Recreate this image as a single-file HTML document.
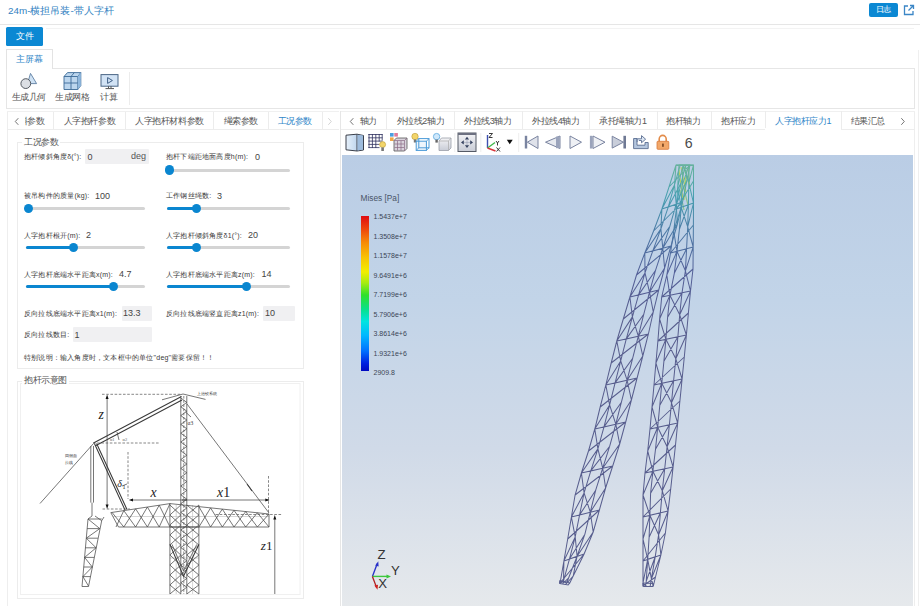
<!DOCTYPE html>
<html><head><meta charset="utf-8">
<style>
*{box-sizing:border-box;margin:0;padding:0}
html,body{width:920px;height:606px;overflow:hidden;background:#fff;font-family:"Liberation Sans",sans-serif;color:#444}
.a{position:absolute;white-space:nowrap}
.t9{font-size:9px;line-height:10px;letter-spacing:-0.4px}
.lbl{font-size:7px;line-height:9px;color:#383838;letter-spacing:0.2px}
.val{font-size:9px;line-height:10px;color:#444}
.trk{position:absolute;height:3px;background:#d4d4d4;border-radius:2px}
.act{position:absolute;left:0;top:0;height:3px;background:#0a86d0;border-radius:2px}
.knob{position:absolute;width:9.2px;height:9.2px;border-radius:5px;background:#0a86d0;top:-3.1px}
.inp{position:absolute;background:#f0f0f2;border-radius:1px}
.tab{position:absolute;top:0;height:19px;border-right:1px solid #ececec;font-size:8.6px;line-height:19px;color:#444;text-align:center}
</style></head><body>

<!-- title bar -->
<div class="a" style="left:8px;top:5px;font-size:9.9px;line-height:12px;color:#3483c2">24m-横担吊装-带人字杆</div>
<div class="a" style="left:869px;top:3px;width:29px;height:14px;background:#0b88d3;border-radius:2px;color:#fff;font-size:8px;line-height:14px;text-align:center;letter-spacing:-0.6px;text-indent:-0.6px">日志</div>
<svg class="a" style="left:903px;top:4px" width="12" height="12" viewBox="0 0 12 12"><path d="M5 2H1.5V10.5H10V7" fill="none" stroke="#3b86c6" stroke-width="1.3"/><path d="M7 1.5H10.5V5M10.5 1.5L5.5 6.5" fill="none" stroke="#3b86c6" stroke-width="1.3"/></svg>
<div class="a" style="left:0;top:24px;width:920px;height:1px;background:#e6e6e6"></div>
<div class="a" style="left:46px;top:27.5px;width:868px;height:1px;background:#f3f3f3"></div>

<!-- file button -->
<div class="a" style="left:918px;top:50px;width:1px;height:556px;background:#efefef"></div>
<div class="a" style="left:6px;top:27px;width:37px;height:19px;border-radius:1.5px;background:#0b88d3;color:#fff;font-size:8.8px;line-height:19px;text-align:center">文件</div>
<!-- ribbon tab -->
<div class="a" style="left:6px;top:49px;width:47px;height:20px;border:1px solid #e3e3e3;border-bottom:none;background:#fff;color:#2f86c8;font-size:8.8px;line-height:18px;text-align:center;z-index:2">主屏幕</div>
<div class="a" style="left:6px;top:68px;width:909px;height:41px;border:1px solid #e6e6e6"></div>
<div class="a" style="left:129px;top:72px;width:1px;height:33px;background:#ececec"></div>

<svg class="a" style="left:0;top:60px" width="130" height="32" viewBox="0 60 130 32">
<path d="M30.5 73.4L36.6 83.6H27.5Z" fill="#cfe2f4" stroke="#5d7fa3" stroke-width="0.9" stroke-linejoin="round"/>
<circle cx="25.8" cy="83.6" r="4.9" fill="#dcdfe4" stroke="#555b63" stroke-width="1"/>
<path d="M64 76.5L67.5 72.6H80.8V85.6L77.8 89.5H64Z" fill="#bcd6ee" stroke="#3b6a96" stroke-width="0.9" stroke-linejoin="round"/>
<path d="M64 76.5H77.8L80.8 72.6M77.8 76.5V89.5M71 76.5V89.5M64 83H77.8M71 76.5L74.3 72.6M77.8 83L80.8 79" fill="none" stroke="#3b6a96" stroke-width="0.9"/>
<path d="M77.8 76.5L80.8 72.6V85.6L77.8 89.5Z" fill="#8fb7dd"/>
<rect x="101" y="74.6" width="17" height="11.6" fill="#d2e3f5" stroke="#4b6685" stroke-width="1"/>
<path d="M107.6 77.6L112.4 80.5L107.6 83.4Z" fill="none" stroke="#3f5f86" stroke-width="1"/>
<path d="M108.5 86.2V88.2M111 86.2V88.2M105.5 88.6H114" stroke="#555" stroke-width="1"/>
</svg>
<div class="a t9" style="left:11.5px;top:92px;color:#555">生成几何</div>
<div class="a t9" style="left:55px;top:92px;color:#555">生成网格</div>
<div class="a t9" style="left:100px;top:92px;color:#555">计算</div>


<!-- left panel -->
<div class="a" style="left:7px;top:111px;width:334px;height:495px;border-left:1px solid #eeeeee;border-right:1px solid #e6e6e6"></div>
<div class="a" style="left:7px;top:129px;width:332px;height:1px;background:#ededed"></div>
<div class="a" style="left:53px;top:111px;width:1px;height:18px;background:#ececec"></div>
<div class="a" style="left:125px;top:111px;width:1px;height:18px;background:#ececec"></div>
<div class="a" style="left:213px;top:111px;width:1px;height:18px;background:#ececec"></div>
<div class="a" style="left:268px;top:111px;width:1px;height:18px;background:#ececec"></div>
<div class="a" style="left:322px;top:111px;width:1px;height:18px;background:#ececec"></div>
<div class="a" style="left:7px;top:111px;width:332px;height:1px;background:#f0f0f0"></div>
<svg class="a" style="left:14px;top:117px" width="6" height="9"><path d="M4.3 1.2L1.3 4.5L4.3 7.8" fill="none" stroke="#666" stroke-width="0.9"/></svg>
<div class="a" style="left:24.5px;top:111px;width:28px;height:18px;overflow:hidden"><div class="a t9" style="right:8.2px;top:5px;color:#555">料参数</div></div>
<div class="a t9" style="left:63.5px;top:116px;color:#555">人字抱杆参数</div>
<div class="a t9" style="left:135px;top:116px;color:#555">人字抱杆材料参数</div>
<div class="a t9" style="left:223.5px;top:116px;color:#555">绳索参数</div>
<div class="a t9" style="left:277.5px;top:116px;color:#2f86c8">工况参数</div>
<svg class="a" style="left:327px;top:117px" width="6" height="9"><path d="M1.3 1.2L4.3 4.5L1.3 7.8" fill="none" stroke="#cfcfcf" stroke-width="0.9"/></svg>

<!-- fieldset 1 -->
<div class="a" style="left:17px;top:142px;width:287px;height:227px;border:1px solid #ececec"></div>
<div class="a t9" style="left:22px;top:137px;background:#fff;padding:0 2px;color:#555">工况参数</div>

<div class="a lbl" style="left:24px;top:152px">抱杆倾斜角度δ(°):</div>
<div class="inp" style="left:85px;top:149px;width:64px;height:15px"></div>
<div class="a val" style="left:87.5px;top:151.5px">0</div>
<div class="a val" style="left:131px;top:151px;color:#555">deg</div>

<div class="a lbl" style="left:166px;top:152px">抱杆下端距地面高度h(m):</div>
<div class="a val" style="left:255px;top:151.5px">0</div>
<div class="trk" style="left:167px;top:168.5px;width:123px"><div class="knob" style="left:-2px"></div></div>

<div class="a lbl" style="left:24px;top:191px">被吊构件的质量(kg):</div>
<div class="a val" style="left:95px;top:190.5px">100</div>
<div class="trk" style="left:26px;top:207px;width:119px"><div class="knob" style="left:-2px"></div></div>
<div class="a lbl" style="left:166px;top:191px">工作钢丝绳数:</div>
<div class="a val" style="left:217px;top:190.5px">3</div>
<div class="trk" style="left:167px;top:207px;width:123px"><div class="act" style="width:30px"></div><div class="knob" style="left:25px"></div></div>

<div class="a lbl" style="left:24px;top:230.5px">人字抱杆根开(m):</div>
<div class="a val" style="left:86px;top:230px">2</div>
<div class="trk" style="left:26px;top:246px;width:119px"><div class="act" style="width:48px"></div><div class="knob" style="left:43px"></div></div>
<div class="a lbl" style="left:166px;top:230.5px">人字抱杆倾斜角度δ1(°):</div>
<div class="a val" style="left:248px;top:230px">20</div>
<div class="trk" style="left:167px;top:246px;width:123px"><div class="act" style="width:30px"></div><div class="knob" style="left:25px"></div></div>

<div class="a lbl" style="left:24px;top:269.5px">人字抱杆底端水平距离x(m):</div>
<div class="a val" style="left:119px;top:269px">4.7</div>
<div class="trk" style="left:26px;top:285px;width:119px"><div class="act" style="width:88px"></div><div class="knob" style="left:83px"></div></div>
<div class="a lbl" style="left:166px;top:269.5px">人字抱杆底端水平距离z(m):</div>
<div class="a val" style="left:261.5px;top:269px">14</div>
<div class="trk" style="left:167px;top:285px;width:123px"><div class="act" style="width:80px"></div><div class="knob" style="left:75px"></div></div>

<div class="a lbl" style="left:24px;top:309px">反向拉线底端水平距离x1(m):</div>
<div class="inp" style="left:121.5px;top:305.5px;width:30px;height:15px"></div>
<div class="a val" style="left:123px;top:308px">13.3</div>
<div class="a lbl" style="left:166px;top:309px">反向拉线底端竖直距离z1(m):</div>
<div class="inp" style="left:263px;top:305.5px;width:31.5px;height:15px"></div>
<div class="a val" style="left:265px;top:308px">10</div>

<div class="a lbl" style="left:24px;top:330px">反向拉线数目:</div>
<div class="inp" style="left:72.5px;top:327px;width:79px;height:15px"></div>
<div class="a val" style="left:74.5px;top:329.5px">1</div>

<div class="a lbl" style="left:24px;top:352.5px">特别说明：输入角度时，文本框中的单位"deg"需要保留！！</div>

<!-- fieldset 2 -->
<div class="a" style="left:16.5px;top:380.5px;width:287px;height:218px;border:1px solid #ececec"></div>
<div class="a t9" style="left:22px;top:375px;background:#fff;padding:0 2px;color:#555;z-index:3;letter-spacing:-0.5px">抱杆示意图</div>
<div id="diagram"><svg class="a" style="left:17px;top:381px" width="286" height="217" viewBox="17 381 286 217">
<rect x="20.5" y="383.5" width="279.5" height="211" fill="none" stroke="#f0f0f0" stroke-width="1"/>
<path d="M113.0 516.5L269.0 516.5M176.2 505.0L176.2 594.0M192.6 505.0L192.6 594.0M169.9 558.0L198.9 558.0" fill="none" stroke="#bbb" stroke-width="0.6"/>
<path d="M107.1 397.0L107.1 506.0M131.0 500.0L269.0 500.0M274.8 518.0L274.8 594.0M162.0 399.8L183.0 394.0M183.0 394.0L205.5 399.4M93.5 443.5L40.0 503.5M90.8 446.0L90.8 502.6M93.5 446.0L93.5 502.6M92.0 502.6L92.0 516.0M187.0 404.0L269.0 513.0M117.0 432.0L119.0 440.0M185.5 412.0L191.0 417.0M122.0 486.0L127.0 484.0M180.8 396.0L180.8 594.0M186.8 396.0L186.8 594.0M180.8 398.0L186.8 402.4M186.8 402.4L180.8 406.8M180.8 406.8L186.8 411.2M186.8 411.2L180.8 415.6M180.8 415.6L186.8 420.0M186.8 420.0L180.8 424.4M180.8 424.4L186.8 428.8M186.8 428.8L180.8 433.2M180.8 433.2L186.8 437.6M186.8 437.6L180.8 442.0M180.8 442.0L186.8 446.4M186.8 446.4L180.8 450.8M180.8 450.8L186.8 455.2M186.8 455.2L180.8 459.6M180.8 459.6L186.8 464.0M186.8 464.0L180.8 468.4M180.8 468.4L186.8 472.8M186.8 472.8L180.8 477.2M180.8 477.2L186.8 481.6M186.8 481.6L180.8 486.0M180.8 486.0L186.8 490.4M186.8 490.4L180.8 494.8M180.8 494.8L186.8 499.2M186.8 499.2L180.8 503.6M180.8 503.6L186.8 508.0M186.8 508.0L180.8 512.4M180.8 512.4L186.8 516.8M186.8 516.8L180.8 521.2M180.8 521.2L186.8 525.6M186.8 525.6L180.8 530.0M180.8 530.0L186.8 534.4M186.8 534.4L180.8 538.8M180.8 538.8L186.8 543.2M186.8 543.2L180.8 547.6M180.8 547.6L186.8 552.0M186.8 552.0L180.8 556.4M180.8 556.4L186.8 560.8M186.8 560.8L180.8 565.2M180.8 565.2L186.8 569.6M186.8 569.6L180.8 574.0M180.8 574.0L186.8 578.4M186.8 578.4L180.8 582.8M180.8 582.8L186.8 587.2M186.8 587.2L180.8 591.6M110.8 512.6L170.0 503.6L269.0 514.0M118.5 527.0L269.0 527.0M110.8 512.6L118.5 527.0M269.0 514.0L269.0 527.0M112.0 512.4L123.8 527.0M116.0 527.0L123.8 510.6M123.8 510.6L135.6 527.0M123.8 527.0L135.6 508.8M135.6 508.8L147.4 527.0M135.6 527.0L147.4 507.0M147.4 507.0L159.2 527.0M147.4 527.0L159.2 505.2M159.2 505.2L170.0 527.0M159.2 527.0L170.0 503.6M198.9 506.6L210.6 527.0M198.9 527.0L210.6 507.9M210.6 507.9L222.3 527.0M210.6 527.0L222.3 509.1M222.3 509.1L234.0 527.0M222.3 527.0L234.0 510.3M234.0 510.3L245.7 527.0M234.0 527.0L245.7 511.6M245.7 511.6L257.4 527.0M245.7 527.0L257.4 512.8M257.4 512.8L269.0 527.0M257.4 527.0L269.0 514.0M169.9 503.6L169.9 594.0M198.9 505.0L198.9 594.0M169.9 505.0L180.8 515.0M180.8 505.0L169.9 515.0M198.9 505.0L186.8 515.0M186.8 505.0L198.9 515.0M169.9 515.0L180.8 525.0M180.8 515.0L169.9 525.0M198.9 515.0L186.8 525.0M186.8 515.0L198.9 525.0M169.9 525.0L180.8 535.0M180.8 525.0L169.9 535.0M198.9 525.0L186.8 535.0M186.8 525.0L198.9 535.0M169.9 535.0L180.8 545.0M180.8 535.0L169.9 545.0M198.9 535.0L186.8 545.0M186.8 535.0L198.9 545.0M169.9 545.0L180.8 555.0M180.8 545.0L169.9 555.0M198.9 545.0L186.8 555.0M186.8 545.0L198.9 555.0M169.9 555.0L180.8 565.0M180.8 555.0L169.9 565.0M198.9 555.0L186.8 565.0M186.8 555.0L198.9 565.0M169.9 565.0L180.8 575.0M180.8 565.0L169.9 575.0M198.9 565.0L186.8 575.0M186.8 565.0L198.9 575.0M169.9 575.0L180.8 585.0M180.8 575.0L169.9 585.0M198.9 575.0L186.8 585.0M186.8 575.0L198.9 585.0M169.9 585.0L180.8 594.0M180.8 585.0L169.9 594.0M198.9 585.0L186.8 594.0M186.8 585.0L198.9 594.0M169.9 527.0L198.9 527.0M172.0 544.4L183.5 571.0L196.8 544.4M92.0 516.0L88.0 519.0L82.0 586.5L88.5 586.5L101.7 520.7L95.0 516.0M88.0 519.0L99.8 528.6M88.0 519.0L101.7 519.0M99.8 528.6L86.3 538.2M87.1 528.6L99.8 528.6M86.3 538.2L96.1 547.8M86.3 538.2L97.9 538.2M96.1 547.8L84.6 557.4M85.4 547.8L96.1 547.8M84.6 557.4L92.3 567.0M84.6 557.4L94.2 557.4M92.3 567.0L82.9 576.6M83.7 567.0L92.3 567.0M82.9 576.6L88.6 586.2M82.9 576.6L90.4 576.6M101.7 520.7L104.0 517.0" fill="none" stroke="#4a4a4a" stroke-width="0.75"/>
<path d="M182.0 500.0L187.0 500.0M93.5 443.0L181.5 396.5M95.0 446.0L182.0 400.0M94.4 443.5L125.0 510.0M96.6 443.5L127.0 509.5M247.0 484.0L252.0 491.0M169.9 544.4L183.5 576.2L198.9 544.4" fill="none" stroke="#3a3a3a" stroke-width="1.05"/>
<path d="M102.0 394.3L181.0 394.3M93.0 443.0L159.5 443.0M128.0 452.0L128.0 499.0M268.5 476.0L268.5 514.0M215.5 514.5L281.5 514.5M102.5 509.0L130.0 509.0M183.8 396.0L183.8 594.0" fill="none" stroke="#555" stroke-width="0.7" stroke-dasharray="2.6 1.6"/>
<path d="M107.1 394.5L105.6 399H108.6Z M107.1 509L105.6 504.5H108.6Z M128.8 500L133 498.4V501.6Z M269.5 500L265.3 498.4V501.6Z M274.8 515L273.3 519.5H276.3Z" fill="#111"/>
<text x="98.6" y="418.9" font-family="Liberation Serif" font-style="italic" font-size="13.8" fill="#222">z</text>
<text x="150.4" y="497.3" font-family="Liberation Serif" font-style="italic" font-size="13.8" fill="#222">x</text>
<text x="217" y="497.4" font-family="Liberation Serif" font-size="13.8" fill="#222"><tspan font-style="italic">x</tspan>1</text>
<text x="260.8" y="550.4" font-family="Liberation Serif" font-size="13.2" fill="#222"><tspan font-style="italic">z</tspan>1</text>
<text x="117.3" y="487.3" font-family="Liberation Serif" font-style="italic" font-size="10" fill="#222">δ</text>
<text x="122.5" y="489.4" font-family="Liberation Serif" font-size="6" fill="#222">1</text>
<text x="187.6" y="424.5" font-family="Liberation Serif" font-size="5.5" fill="#333">α3</text>
<text x="110" y="441.3" font-family="Liberation Serif" font-size="4.5" fill="#666">α1</text>
<text x="122.6" y="441.3" font-family="Liberation Serif" font-size="4.5" fill="#666">α2</text>
<text x="196.6" y="395.2" font-size="4" fill="#333">上抬铰系统</text>
<text x="64.5" y="457" font-size="4" fill="#333">回侧面</text>
<text x="64.5" y="464" font-size="4" fill="#333">拉线</text>
</svg></div><!--/diagram-->


<!-- right panel -->
<div class="a" style="left:341px;top:111px;width:574px;height:495px;border-right:1px solid #eeeeee"></div>
<div class="a" style="left:341px;top:111px;width:574px;height:1px;background:#f0f0f0"></div>
<div class="a" style="left:341px;top:128.5px;width:574px;height:1px;background:#ededed"></div>
<svg class="a" style="left:348.5px;top:117px" width="6" height="9"><path d="M4.3 1.2L1.3 4.5L4.3 7.8" fill="none" stroke="#666" stroke-width="0.9"/></svg>
<div class="a t9" style="left:359.5px;top:116px;color:#555">轴力</div>
<div class="a t9" style="left:396.5px;top:116px;color:#555">外拉线2轴力</div>
<div class="a t9" style="left:464px;top:116px;color:#555">外拉线3轴力</div>
<div class="a t9" style="left:532px;top:116px;color:#555">外拉线4轴力</div>
<div class="a t9" style="left:599px;top:116px;color:#555">承托绳轴力1</div>
<div class="a t9" style="left:666px;top:116px;color:#555">抱杆轴力</div>
<div class="a t9" style="left:721px;top:116px;color:#555">抱杆应力</div>
<div class="a t9" style="left:775px;top:116px;color:#2f86c8">人字抱杆应力1</div>
<div class="a t9" style="left:850.5px;top:116px;color:#555">结果汇总</div>
<svg class="a" style="left:899.5px;top:117px" width="6" height="9"><path d="M1.3 1.2L4.3 4.5L1.3 7.8" fill="none" stroke="#666" stroke-width="0.9"/></svg>
<div class="a" style="left:386px;top:111px;width:1px;height:18px;background:#ececec"></div>
<div class="a" style="left:454px;top:111px;width:1px;height:18px;background:#ececec"></div>
<div class="a" style="left:522px;top:111px;width:1px;height:18px;background:#ececec"></div>
<div class="a" style="left:588.5px;top:111px;width:1px;height:18px;background:#ececec"></div>
<div class="a" style="left:656.5px;top:111px;width:1px;height:18px;background:#ececec"></div>
<div class="a" style="left:711px;top:111px;width:1px;height:18px;background:#ececec"></div>
<div class="a" style="left:764.5px;top:111px;width:1px;height:18px;background:#ececec"></div>
<div class="a" style="left:840.5px;top:111px;width:1px;height:18px;background:#ececec"></div>
<div class="a" style="left:765px;top:128px;width:75.5px;height:2px;background:#fff"></div>
<svg class="a" style="left:340px;top:128px" width="360" height="27" viewBox="340 128 360 27">
<defs>
<linearGradient id="gb" x1="0" x2="1"><stop offset="0" stop-color="#e6f0fa"/><stop offset="1" stop-color="#a9c6e6"/></linearGradient>
<linearGradient id="gg" x1="0" y1="0" x2="0" y2="1"><stop offset="0" stop-color="#f4f4f6"/><stop offset="1" stop-color="#c8ccd6"/></linearGradient>
</defs>
<!-- icon1 box -->
<path d="M346 135.2L357 134.2L363.5 135.5V150L357 151L346 149.8Z" fill="url(#gb)" stroke="#3a3f4a" stroke-width="1"/>
<path d="M357 134.2V151" stroke="#3a3f4a" stroke-width="1"/>
<path d="M357.5 134.8L363 135.6V149.6L357.5 150.5Z" fill="#9dbbdc"/>
<!-- icon2 grid -->
<path d="M368.3 134.5H382.5M368.3 137.8H382.5M368.3 141.1H382.5M368.3 144.4H379.5M368.3 147.6H379.5M369 134V148M372.4 134V148M375.8 134V148M379.2 134V141.5M382.2 134V140.5" stroke="#2e3160" stroke-width="0.8" fill="none"/>
<circle cx="382.6" cy="144.6" r="3" fill="#f3d56a" stroke="#b99a38" stroke-width="0.6"/>
<rect x="381.3" y="147.4" width="2.6" height="3.6" fill="#777"/>
<!-- icon3 -->
<rect x="390" y="133" width="3.6" height="3.6" fill="#4b9ee0"/><rect x="394.3" y="133" width="3.6" height="3.6" fill="#e07a9a"/><rect x="390" y="137.4" width="3.6" height="3.6" fill="#f0a84a"/>
<path d="M394 140.5L396.5 138H407V148.5L404.5 151H394Z" fill="#d9d3dc" stroke="#555" stroke-width="0.8"/>
<path d="M394 140.5H404.5L407 138M404.5 140.5V151M397.5 141V150.5M401 141V150.5M394.5 144H404M394.5 147.5H404" stroke="#8a6a84" stroke-width="0.7" fill="none"/>
<!-- icon4 -->
<circle cx="415" cy="136.5" r="3.2" fill="#f3d56a" stroke="#b99a38" stroke-width="0.6"/><rect x="413.8" y="139.5" width="2.4" height="3" fill="#777"/>
<rect x="416.2" y="141.2" width="10.2" height="9.2" fill="#eef5fc" stroke="#4a9ad8" stroke-width="1"/>
<rect x="418.8" y="138.6" width="10.2" height="9.2" fill="none" stroke="#4a9ad8" stroke-width="1"/>
<path d="M416.2 141.2L418.8 138.6M426.4 141.2L429 138.6M426.4 150.4L429 147.8M416.2 150.4L418.8 147.8" stroke="#4a9ad8" stroke-width="0.9"/>
<!-- icon5 -->
<circle cx="436.6" cy="136.6" r="3.2" fill="#cfe8fb" stroke="#5aa8e0" stroke-width="0.8"/><rect x="435.4" y="139.6" width="2.4" height="3" fill="#666"/>
<path d="M439 141L441.5 138H451V148L448.5 150.5H439Z" fill="url(#gg)" stroke="#9a9ea8" stroke-width="0.8"/>
<path d="M439 141H448.5L451 138M448.5 141V150.5" stroke="#aaa" stroke-width="0.7" fill="none"/>
<rect x="454.3" y="133" width="1" height="19" fill="#eeeeee"/>
<!-- icon6 fit -->
<rect x="458" y="133" width="18" height="18.5" fill="url(#gg)" stroke="#555a66" stroke-width="1"/>
<rect x="458" y="133" width="18" height="2" fill="#6c7080"/>
<path d="M467 136.8L464.9 139.6H469.1ZM467 148L464.9 145.2H469.1ZM461 142.4L463.8 140.3V144.5ZM473 142.4L470.2 140.3V144.5Z" fill="#34405e"/><path d="M467 139.6V145.2M463.8 142.4H470.2" stroke="#8a92a8" stroke-width="0.5"/>
<rect x="480.3" y="133" width="1" height="19" fill="#eeeeee"/>
<!-- icon7 axes -->
<path d="M487.5 148L487.5 135" stroke="#3c4fb0" stroke-width="1.4"/>
<path d="M487.5 148L495 142.5" stroke="#3fb84a" stroke-width="1.4"/>
<path d="M487.5 148L495.5 151" stroke="#d8343a" stroke-width="1.4"/>
<path d="M489 133.5H492.5L489 137.5H492.5" stroke="#222" stroke-width="0.9" fill="none"/>
<path d="M496 141L497.5 143L499 141M497.5 143V145.5" stroke="#222" stroke-width="0.9" fill="none"/>
<path d="M496.5 147.5L500 151.5M500 147.5L496.5 151.5" stroke="#222" stroke-width="0.9"/>
<path d="M506.8 139.8H512.7L509.75 144.2Z" fill="#111"/>
<rect x="518.2" y="133" width="1" height="19" fill="#eeeeee"/>
<!-- nav -->
<rect x="524.8" y="135.8" width="2.4" height="12.7" fill="#7a84a0"/>
<path d="M527.3 142.2L538 136V148.5Z" fill="#dfe2ea" stroke="#7a84a0" stroke-width="1"/>
<path d="M545.5 142.2L560 136V148.5Z" fill="#e6e9ef" stroke="#7a84a0" stroke-width="1"/>
<rect x="556" y="136.5" width="3.8" height="11.7" fill="#9aa3bb"/>
<path d="M570 136V148.5L581.5 142.2Z" fill="#eef0f4" stroke="#7a84a0" stroke-width="1"/>
<rect x="589.9" y="135.8" width="2.6" height="12.7" fill="#9aa3bb"/>
<path d="M593 136V148.5L605 142.2Z" fill="#eef0f4" stroke="#7a84a0" stroke-width="1"/>
<path d="M612.2 136.2V148.1L623.4 142.2Z" fill="#c9ceda" stroke="#7a84a0" stroke-width="1"/>
<rect x="623.4" y="135.8" width="2.6" height="12.7" fill="#6f7994"/>
<!-- share -->
<path d="M633.6 138.5H637V145.2H645V142.5H648.2V148.6H633.6Z" fill="#b4c6de" stroke="#5a6e92" stroke-width="0.9" stroke-linejoin="round"/>
<path d="M637.2 142V138.8H641.5V135.6L645.6 139.2L641.5 142.8V140.5H639" fill="#dde7f3" stroke="#5a6e92" stroke-width="0.9" stroke-linejoin="round"/>
<!-- lock -->
<path d="M659.2 141.5V139A3.5 3.6 0 0 1 666.2 139V141.5" fill="none" stroke="#e38c4a" stroke-width="1.6"/>
<rect x="657" y="141.3" width="11.8" height="8" rx="0.8" fill="#f2a86a" stroke="#d8783a" stroke-width="0.8"/>
<rect x="662.2" y="143.6" width="1.5" height="3.2" fill="#6a3a1a"/>
</svg>
<div class="a" style="left:684.8px;top:134.6px;font-size:14.2px;line-height:16px;color:#4a4a4a">6</div>

<div class="a" style="left:342px;top:154.5px;width:571px;height:452px;background:linear-gradient(#bacde5 0%,#c2d4e8 32%,#d0dae8 65%,#e6e9ec 100%)"></div>
<div class="a" style="left:360.5px;top:192.5px;font-size:8.3px;line-height:10px;color:#4a5566">Mises [Pa]</div>
<div class="a" style="left:360.8px;top:216.2px;width:8.7px;height:155.2px;background:linear-gradient(#e00c12 0%,#ee4a0c 9%,#f68a08 17%,#f8c404 27%,#f2ee00 36%,#a8ec10 43%,#30e02a 51%,#08e08a 60%,#00e4e0 68%,#00b8ff 77%,#0070ff 87%,#0020e0 95%,#0008c0 100%)"></div>
<div class="a" style="left:373.5px;top:213.1px;font-size:7px;line-height:8px;color:#3c4656">1.5437e+7</div>
<div class="a" style="left:373.5px;top:232.6px;font-size:7px;line-height:8px;color:#3c4656">1.3508e+7</div>
<div class="a" style="left:373.5px;top:252.1px;font-size:7px;line-height:8px;color:#3c4656">1.1578e+7</div>
<div class="a" style="left:373.5px;top:271.6px;font-size:7px;line-height:8px;color:#3c4656">9.6491e+6</div>
<div class="a" style="left:373.5px;top:291.1px;font-size:7px;line-height:8px;color:#3c4656">7.7199e+6</div>
<div class="a" style="left:373.5px;top:310.6px;font-size:7px;line-height:8px;color:#3c4656">5.7906e+6</div>
<div class="a" style="left:373.5px;top:330.1px;font-size:7px;line-height:8px;color:#3c4656">3.8614e+6</div>
<div class="a" style="left:373.5px;top:349.6px;font-size:7px;line-height:8px;color:#3c4656">1.9321e+6</div>
<div class="a" style="left:373.5px;top:369.1px;font-size:7px;line-height:8px;color:#3c4656">2909.8</div>

<svg class="a" style="left:360px;top:540px" width="50" height="55" viewBox="360 540 50 55">
<path d="M372.4 576.4L377.3 563.5" stroke="#2830c8" stroke-width="1.3"/><path d="M378.3 561.2L375.2 565.6L378.6 566.6Z" fill="#2830c8"/>
<path d="M372.4 576.4L388 576.4" stroke="#3cc83c" stroke-width="1.4"/><path d="M391 576.4L386.5 574.4V578.4Z" fill="#3cc83c"/>
<path d="M372.4 576.4L376.6 587.4" stroke="#b02020" stroke-width="1.3"/><path d="M377.5 589.8L374.4 585.6L378 584.8Z" fill="#d02020"/>
</svg>
<div class="a" style="left:377.6px;top:547.6px;font-size:13.2px;line-height:14px;color:#333">Z</div>
<div class="a" style="left:391px;top:563.8px;font-size:13.2px;line-height:14px;color:#333">Y</div>
<div class="a" style="left:378.2px;top:576.8px;font-size:13.2px;line-height:14px;color:#333">X</div>
<div id="tower"><svg class="a" style="left:540px;top:160px" width="170" height="435" viewBox="540 160 170 435">
<defs><linearGradient id="tg" gradientUnits="userSpaceOnUse" x1="0" y1="165" x2="0" y2="320">
<stop offset="0" stop-color="#68b49c"/><stop offset="0.2" stop-color="#48a0b0"/><stop offset="0.45" stop-color="#4c76a4"/><stop offset="0.7" stop-color="#546098"/><stop offset="1" stop-color="#585e8e"/></linearGradient></defs>
<path d="M676 165.3H693.5" stroke="#5aa8a0" stroke-width="1.2"/>
<path d="M681 167L686 192M684 167L690 188M688 168L689.5 185M679 170L683 200M686 175L684 200" stroke="#b4d048" stroke-width="1.1" fill="none" opacity="0.85"/>
<path d="M683 185L688 205M680 190L684 210" stroke="#78c070" stroke-width="1.1" fill="none" opacity="0.8"/>
<path d="M679.0 165.0L677.7 187.0L676.4 209.0L673.7 231.0L670.5 253.0L666.8 275.0L661.7 297.0L659.6 319.0L657.9 341.0L655.9 363.0L654.0 385.0L652.0 407.0L650.0 429.0L647.7 451.0L645.0 473.0L643.0 495.0L643.0 517.0L643.0 539.0L643.0 561.0L643.0 583.0L643.0 586.0M683.1 165.0L682.2 185.3L681.2 207.3L679.4 229.3L677.0 251.3L674.3 273.3L669.9 295.3L667.6 317.3L665.9 339.3L663.9 361.3L661.8 383.3L659.8 405.3L657.7 427.3L655.5 449.3L652.9 471.3L650.6 493.3L649.9 515.3L649.1 537.3L647.7 559.3L646.2 581.3L645.9 586.0M689.1 165.0L688.8 182.8L688.4 204.8L687.7 226.8L686.6 248.8L685.4 270.8L682.0 292.8L679.7 314.8L677.9 336.8L675.8 358.8L673.6 380.8L671.5 402.8L669.4 424.8L667.1 446.8L664.7 468.8L662.3 490.8L660.4 512.8L658.6 534.8L655.2 556.8L651.4 578.8L650.2 586.0M693.5 165.0L693.5 181.0L693.5 203.0L693.4 225.0L693.2 247.0L693.0 269.0L690.5 291.0L688.4 313.0L686.4 335.0L684.3 357.0L682.1 379.0L679.9 401.0L677.7 423.0L675.5 445.0L673.1 467.0L670.7 489.0L668.1 511.0L665.4 533.0L660.9 555.0L655.5 577.0L653.3 586.0M683.1 165.0L677.7 187.0M693.5 165.0L688.8 182.8M683.1 165.0L688.8 182.8M682.2 185.3L689.1 165.0M679.0 165.0L693.5 165.0M683.1 165.0L689.1 165.0M677.7 187.0L681.2 207.3M688.8 182.8L693.5 203.0M676.4 209.0L693.5 181.0M681.2 207.3L673.7 231.0M693.5 203.0L687.7 226.8M681.2 207.3L687.7 226.8M679.4 229.3L688.4 204.8M676.4 209.0L693.5 203.0M681.2 207.3L688.4 204.8M673.7 231.0L677.0 251.3M687.7 226.8L693.2 247.0M670.5 253.0L693.4 225.0M677.0 251.3L666.8 275.0M693.2 247.0L685.4 270.8M677.0 251.3L685.4 270.8M674.3 273.3L686.6 248.8M670.5 253.0L693.2 247.0M677.0 251.3L686.6 248.8M666.8 275.0L669.9 295.3M685.4 270.8L690.5 291.0M661.7 297.0L693.0 269.0M669.9 295.3L659.6 319.0M690.5 291.0L679.7 314.8M669.9 295.3L679.7 314.8M667.6 317.3L682.0 292.8M661.7 297.0L690.5 291.0M669.9 295.3L682.0 292.8M659.6 319.0L665.9 339.3M679.7 314.8L686.4 335.0M657.9 341.0L688.4 313.0M665.9 339.3L655.9 363.0M686.4 335.0L675.8 358.8M665.9 339.3L675.8 358.8M663.9 361.3L677.9 336.8M657.9 341.0L686.4 335.0M665.9 339.3L677.9 336.8M655.9 363.0L661.8 383.3M675.8 358.8L682.1 379.0M654.0 385.0L684.3 357.0M661.8 383.3L652.0 407.0M682.1 379.0L671.5 402.8M661.8 383.3L671.5 402.8M659.8 405.3L673.6 380.8M654.0 385.0L682.1 379.0M661.8 383.3L673.6 380.8M652.0 407.0L657.7 427.3M671.5 402.8L677.7 423.0M650.0 429.0L679.9 401.0M657.7 427.3L647.7 451.0M677.7 423.0L667.1 446.8M657.7 427.3L667.1 446.8M655.5 449.3L669.4 424.8M650.0 429.0L677.7 423.0M657.7 427.3L669.4 424.8M647.7 451.0L652.9 471.3M667.1 446.8L673.1 467.0M645.0 473.0L675.5 445.0M652.9 471.3L643.0 495.0M673.1 467.0L662.3 490.8M652.9 471.3L662.3 490.8M650.6 493.3L664.7 468.8M645.0 473.0L673.1 467.0M652.9 471.3L664.7 468.8M643.0 495.0L649.9 515.3M662.3 490.8L668.1 511.0M643.0 517.0L670.7 489.0M649.9 515.3L643.0 539.0M668.1 511.0L658.6 534.8M649.9 515.3L658.6 534.8M649.1 537.3L660.4 512.8M643.0 517.0L668.1 511.0M649.9 515.3L660.4 512.8M643.0 539.0L647.7 559.3M658.6 534.8L660.9 555.0M643.0 561.0L665.4 533.0M647.7 559.3L643.0 583.0M660.9 555.0L651.4 578.8M647.7 559.3L651.4 578.8M646.2 581.3L655.2 556.8M643.0 561.0L660.9 555.0M647.7 559.3L655.2 556.8M643.0 583.0L645.9 586.0M651.4 578.8L653.3 586.0M643.0 586.0L655.5 577.0" fill="none" stroke="url(#tg)" stroke-width="1.02" stroke-linecap="round"/>
<path d="M676.0 165.0L669.0 187.0L661.9 209.0L653.6 231.0L644.8 253.0L636.5 275.0L629.9 297.0L623.3 319.0L616.8 341.0L611.2 363.0L605.8 385.0L600.2 407.0L594.8 429.0L588.5 451.0L581.4 473.0L575.1 495.0L571.4 517.0L567.7 539.0L563.9 561.0L560.1 583.0L560.0 583.5M680.2 165.0L674.5 184.9L668.3 206.9L660.9 228.9L652.8 250.9L645.0 272.9L638.6 294.9L632.4 316.9L626.3 338.9L620.7 360.9L615.1 382.9L609.6 404.9L604.0 426.9L597.9 448.9L590.8 470.9L584.1 492.9L579.6 514.9L575.2 536.9L569.5 558.9L563.5 580.9L562.9 583.5M685.5 165.0L681.4 182.2L676.2 204.2L669.9 226.2L662.8 248.2L655.6 270.2L649.5 292.2L643.8 314.2L638.3 336.2L632.7 358.2L627.1 380.2L621.4 402.2L615.8 424.2L609.7 446.2L602.7 468.2L595.7 490.2L590.3 512.2L584.9 534.2L577.1 556.2L568.5 578.2L566.5 583.5M690.0 165.0L687.0 180.0L682.6 202.0L677.4 224.0L671.0 246.0L664.6 268.0L658.7 290.0L653.3 312.0L648.4 334.0L642.8 356.0L637.1 378.0L631.4 400.0L625.7 422.0L619.7 444.0L612.7 466.0L605.6 488.0L599.4 510.0L593.2 532.0L584.1 554.0L573.2 576.0L569.5 583.5M676.0 165.0L674.5 184.9M685.5 165.0L687.0 180.0M669.0 187.0L690.0 165.0M676.0 165.0L690.0 165.0M680.2 165.0L685.5 165.0M674.5 184.9L661.9 209.0M687.0 180.0L676.2 204.2M674.5 184.9L676.2 204.2M668.3 206.9L681.4 182.2M661.9 209.0L660.9 228.9M676.2 204.2L677.4 224.0M653.6 231.0L682.6 202.0M661.9 209.0L682.6 202.0M668.3 206.9L676.2 204.2M660.9 228.9L644.8 253.0M677.4 224.0L662.8 248.2M660.9 228.9L662.8 248.2M652.8 250.9L669.9 226.2M644.8 253.0L645.0 272.9M662.8 248.2L664.6 268.0M636.5 275.0L671.0 246.0M644.8 253.0L671.0 246.0M652.8 250.9L662.8 248.2M645.0 272.9L629.9 297.0M664.6 268.0L649.5 292.2M645.0 272.9L649.5 292.2M638.6 294.9L655.6 270.2M629.9 297.0L632.4 316.9M649.5 292.2L653.3 312.0M623.3 319.0L658.7 290.0M629.9 297.0L658.7 290.0M638.6 294.9L649.5 292.2M632.4 316.9L616.8 341.0M653.3 312.0L638.3 336.2M632.4 316.9L638.3 336.2M626.3 338.9L643.8 314.2M616.8 341.0L620.7 360.9M638.3 336.2L642.8 356.0M611.2 363.0L648.4 334.0M616.8 341.0L648.4 334.0M626.3 338.9L638.3 336.2M620.7 360.9L605.8 385.0M642.8 356.0L627.1 380.2M620.7 360.9L627.1 380.2M615.1 382.9L632.7 358.2M605.8 385.0L609.6 404.9M627.1 380.2L631.4 400.0M600.2 407.0L637.1 378.0M605.8 385.0L637.1 378.0M615.1 382.9L627.1 380.2M609.6 404.9L594.8 429.0M631.4 400.0L615.8 424.2M609.6 404.9L615.8 424.2M604.0 426.9L621.4 402.2M594.8 429.0L597.9 448.9M615.8 424.2L619.7 444.0M588.5 451.0L625.7 422.0M594.8 429.0L625.7 422.0M604.0 426.9L615.8 424.2M597.9 448.9L581.4 473.0M619.7 444.0L602.7 468.2M597.9 448.9L602.7 468.2M590.8 470.9L609.7 446.2M581.4 473.0L584.1 492.9M602.7 468.2L605.6 488.0M575.1 495.0L612.7 466.0M581.4 473.0L612.7 466.0M590.8 470.9L602.7 468.2M584.1 492.9L571.4 517.0M605.6 488.0L590.3 512.2M584.1 492.9L590.3 512.2M579.6 514.9L595.7 490.2M571.4 517.0L575.2 536.9M590.3 512.2L593.2 532.0M567.7 539.0L599.4 510.0M571.4 517.0L599.4 510.0M579.6 514.9L590.3 512.2M575.2 536.9L563.9 561.0M593.2 532.0L577.1 556.2M575.2 536.9L577.1 556.2M569.5 558.9L584.9 534.2M563.9 561.0L563.5 580.9M577.1 556.2L573.2 576.0M560.1 583.0L584.1 554.0M563.9 561.0L584.1 554.0M569.5 558.9L577.1 556.2M563.5 580.9L560.0 583.5M573.2 576.0L566.5 583.5M563.5 580.9L566.5 583.5M562.9 583.5L568.5 578.2" fill="none" stroke="url(#tg)" stroke-width="1.02" stroke-linecap="round"/>
<path d="M559.7 580.5L569.3 582.5L568.5 585L559.5 583.5Z M643 583L653.3 583.5L653 586.5L643.2 586.5Z" fill="none" stroke="#585e8e" stroke-width="1"/>
</svg></div><!--/tower-->


</body></html>
